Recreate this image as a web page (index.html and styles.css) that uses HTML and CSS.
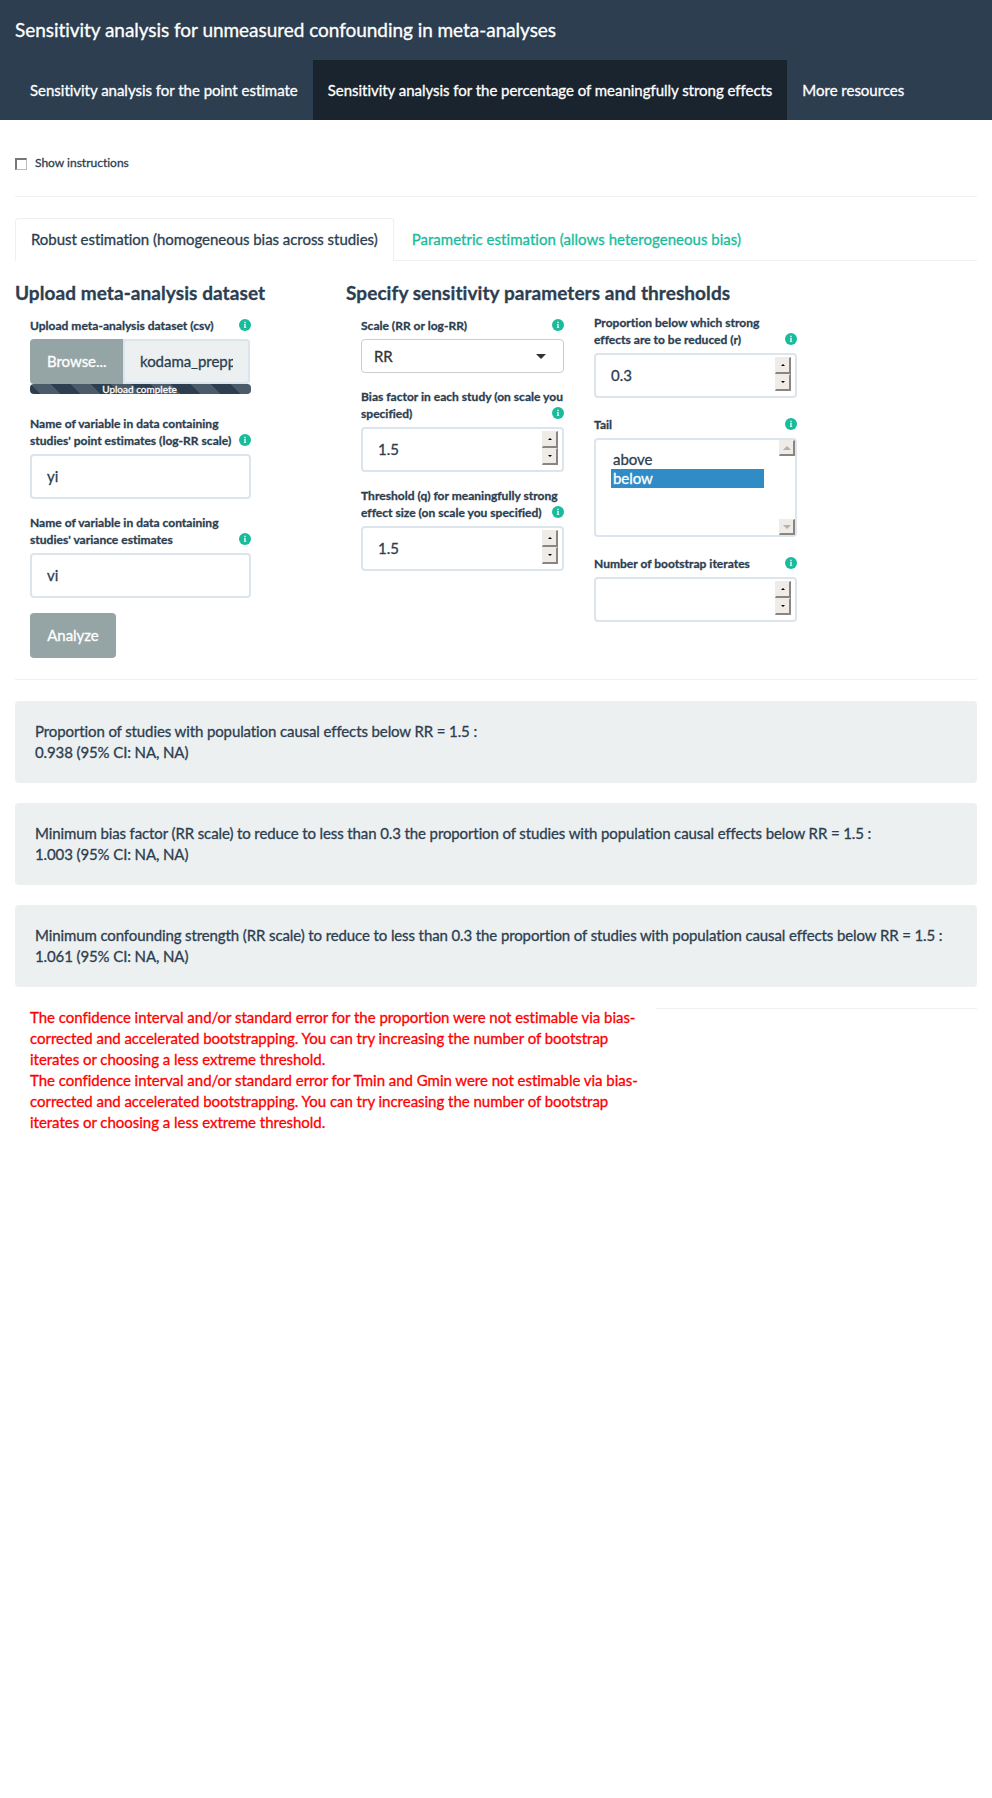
FILE: index.html
```html
<!DOCTYPE html>
<html lang="en">
<head>
<meta charset="utf-8">
<title>Sensitivity analysis for unmeasured confounding in meta-analyses</title>
<link rel="stylesheet" href="styles.css">
</head>
<body>
<svg class="defs" width="0" height="0" aria-hidden="true">
  <symbol id="info" viewBox="0 0 12 12"><circle cx="6" cy="6" r="6" fill="#18bc9c"/><path d="M5.2 2.7h1.6v1.5H5.2zM5 5h1.8v3.2h.5v.9H4.8v-.9h.4V5.9H5z" fill="#fff" fill-opacity=".8"/></symbol>
</svg>
<header class="navbar">
  <div class="brand">Sensitivity analysis for unmeasured confounding in meta-analyses</div>
  <nav class="nav">
    <a class="nav-item">Sensitivity analysis for the point estimate</a>
    <a class="nav-item active">Sensitivity analysis for the percentage of meaningfully strong effects</a>
    <a class="nav-item">More resources</a>
  </nav>
</header>
<main class="page">
  <label class="check"><span class="box"></span><span class="check-text">Show instructions</span></label>
  <hr class="rule rule-top">
  <div class="tabs">
    <a class="tab current">Robust estimation (homogeneous bias across studies)</a>
    <a class="tab">Parametric estimation (allows heterogeneous bias)</a>
  </div>
  <div class="form">
    <section class="upload">
      <h4 class="heading">Upload meta-analysis dataset</h4>
      <div class="col col-first">
        <div class="label"><span>Upload meta-analysis dataset (csv)</span><svg class="info"><use href="#info"/></svg></div>
        <div class="file"><span class="browse">Browse...</span><span class="filename"><span class="clip">kodama_prepped.csv</span></span></div>
        <div class="progress">Upload complete</div>
        <div class="label"><span>Name of variable in data containing<br>studies' point estimates (log-RR scale)</span><svg class="info"><use href="#info"/></svg></div>
        <div class="input">yi</div>
        <div class="label"><span>Name of variable in data containing<br>studies' variance estimates</span><svg class="info"><use href="#info"/></svg></div>
        <div class="input">vi</div>
        <button class="analyze">Analyze</button>
      </div>
    </section>
    <section class="params">
      <h4 class="heading">Specify sensitivity parameters and thresholds</h4>
      <div class="pair">
        <div class="col">
          <div class="label"><span>Scale (RR or log-RR)</span><svg class="info"><use href="#info"/></svg></div>
          <div class="select"><span>RR</span><i class="caret"></i></div>
          <div class="label"><span>Bias factor in each study (on scale you<br>specified)</span><svg class="info over"><use href="#info"/></svg></div>
          <div class="input number">1.5<span class="spin"><i class="up"></i><i class="down"></i></span></div>
          <div class="label"><span>Threshold (q) for meaningfully strong<br>effect size (on scale you specified)</span><svg class="info over"><use href="#info"/></svg></div>
          <div class="input number">1.5<span class="spin"><i class="up"></i><i class="down"></i></span></div>
        </div>
        <div class="col col-third">
          <div class="label"><span>Proportion below which strong<br>effects are to be reduced (r)</span><svg class="info"><use href="#info"/></svg></div>
          <div class="input number">0.3<span class="spin"><i class="up"></i><i class="down"></i></span></div>
          <div class="label"><span>Tail</span><svg class="info"><use href="#info"/></svg></div>
          <div class="list">
            <div class="options"><div class="option">above</div><div class="option selected">below</div></div>
            <div class="scroll"><i class="up"></i><i class="down"></i></div>
          </div>
          <div class="label"><span>Number of bootstrap iterates</span><svg class="info"><use href="#info"/></svg></div>
          <div class="input number"><span></span><span class="spin"><i class="up"></i><i class="down"></i></span></div>
        </div>
      </div>
    </section>
  </div>
  <hr class="rule">
  <div class="wells">
    <div class="well">Proportion of studies with population causal effects below RR = 1.5 :<br>0.938 (95% CI: NA, NA)</div>
    <div class="well">Minimum bias factor (RR scale) to reduce to less than 0.3 the proportion of studies with population causal effects below RR = 1.5 :<br>1.003 (95% CI: NA, NA)</div>
    <div class="well">Minimum confounding strength (RR scale) to reduce to less than 0.3 the proportion of studies with population causal effects below RR = 1.5 :<br>1.061 (95% CI: NA, NA)</div>
  </div>
  <div class="footer">
    <div class="warning">The confidence interval and/or standard error for the proportion were not estimable via bias-<br>corrected and accelerated bootstrapping. You can try increasing the number of bootstrap<br>iterates or choosing a less extreme threshold.<br>The confidence interval and/or standard error for Tmin and Gmin were not estimable via bias-<br>corrected and accelerated bootstrapping. You can try increasing the number of bootstrap<br>iterates or choosing a less extreme threshold.</div>
    <hr class="rule rule-end">
  </div>
</main>
</body>
</html>
```
FILE: styles.css
```css
* { box-sizing: border-box; }
body {
  margin: 0;
  background: #fff;
  color: #2c3e50;
  font: 15px/21px Lato, "Liberation Sans", sans-serif;
  font-variant-ligatures: none;
  letter-spacing: -0.04px;
  -webkit-text-stroke: 0.3px;
  white-space: nowrap;
}
.defs { position: absolute; }
.navbar { height: 120px; background: #2c3e50; color: #fff; }
.brand { height: 60px; padding: 18.5px 15px; font-size: 19px; letter-spacing: -0.04px; }
.nav { display: flex; padding-left: 15px; letter-spacing: -0.02px; }
.nav-item { height: 60px; padding: 19.5px 15px; }
.nav-item.active { background: #1a242f; letter-spacing: -0.03px; }

.page { padding: 0 15px; }
.check { display: flex; padding-top: 32px; height: 76px; font-size: 12px; letter-spacing: 0; }
.box {
  width: 12px; height: 12px; margin: 6px 8px 0 0;
  border: 1px solid #bbb; border-top: 2px solid #777; border-left: 2px solid #777;
}
.rule { height: 1px; margin: 0; border: 0; background: #ecf0f1; }
.tabs { display: flex; gap: 2px; height: 43px; margin-top: 21px; border-bottom: 1px solid #ecf0f1; }
.tab { height: 43px; padding: 11px 16px; color: #18bc9c; letter-spacing: 0.03px; }
.tab.current {
  padding: 10px 15px; background: #fff; color: #2c3e50; letter-spacing: -0.04px;
  border: 1px solid #ecf0f1; border-bottom: 0; border-radius: 4px 4px 0 0;
}

.form { display: grid; grid-template-columns: 331px 1fr; height: 418px; }
.heading { margin: 20px 0 0; height: 36px; font-size: 19px; line-height: 23px; letter-spacing: 0.07px; }
.col { width: 203px; margin-left: 15px; }
.col-first { width: 221px; }
.pair { display: flex; gap: 15px; }
.col-third { margin-top: -3px; }
.label { display: flex; justify-content: space-between; align-items: flex-end; padding-bottom: 5px; font-size: 12px; line-height: 17px; font-weight: 700; letter-spacing: 0.02px; }
.info { flex: none; width: 12px; height: 12px; margin-bottom: 3px; }
.info.over { margin-left: -12px; }
.input { display: flex; justify-content: space-between; height: 45px; margin-bottom: 15px; padding: 10px 15px; border: 2px solid #dce4ec; border-radius: 4px; }
.number { padding: 10px 4px 0 15px; }
.col-third .label + .number { margin-bottom: 18px; }
.spin { width: 16px; height: 34px; margin-top: -8px; }
.up, .down {
  display: flex; align-items: center; justify-content: center;
  width: 16px; height: 17px; background: #efebe7;
  border: 1px solid #efebe7; border-right: 2px solid #8a8580; border-bottom: 2px solid #8a8580;
}
.up::before, .down::before { content: ""; border: 2px solid transparent; border-top-width: 0; border-bottom: 2px solid #000; }
.down::before { border-bottom: 0; border-top: 2px solid #000; }

.file { display: flex; height: 45px; }
.browse { width: 93px; padding: 12px 17px; background: #95a5a6; color: #fff; border-radius: 4px 0 0 4px; }
.filename { width: 127px; padding: 10px 15px; background: #ecf0f1; border: 2px solid #dce4ec; border-radius: 0 4px 4px 0; }
.clip { display: block; width: 93px; overflow: hidden; }
.progress {
  height: 10px; margin-bottom: 21px; padding-right: 2px; border-radius: 4px; overflow: hidden;
  background: linear-gradient(45deg, rgba(255,255,255,.15) 25%, transparent 25%, transparent 50%, rgba(255,255,255,.15) 50%, rgba(255,255,255,.15) 75%, transparent 75%) 1px 0 / 40px 40px #2c3e50;
  color: #fff; font-size: 10px; line-height: 11px; text-align: center; letter-spacing: 0;
}
.analyze { display: block; width: 86px; height: 45px; padding: 0; border: 0; border-radius: 4px; background: #95a5a6; color: #fff; font: inherit; letter-spacing: inherit; }
.select { display: flex; justify-content: space-between; align-items: center; height: 34px; margin-bottom: 15px; padding: 0 17px 0 12px; border: 1px solid #ccc; border-radius: 4px; color: #333; }
.caret { border: 5px solid transparent; border-top-color: #333; border-bottom: 0; }
.list { display: flex; justify-content: space-between; height: 99px; margin-bottom: 18px; padding-left: 15px; border: 2px solid #dce4ec; border-radius: 4px; }
.options { width: 153px; padding-top: 10px; }
.option { height: 19px; padding-left: 2px; line-height: 19px; }
.option.selected { background: #308cc6; color: #fff; }
.scroll { display: flex; flex-direction: column; justify-content: space-between; }
.scroll i { height: 16px; }
.scroll i::before { border-left-width: 4px; border-right-width: 4px; }
.scroll .up::before { border-bottom: 4px solid #b5b0aa; }
.scroll .down::before { border-top: 4px solid #b5b0aa; }

.wells { display: grid; gap: 20px; margin-top: 21px; }
.well { height: 82px; padding: 20px; border-radius: 4px; background: #ecf0f1; letter-spacing: -0.11px; }
.footer { display: flex; margin-top: 20px; }
.warning { width: 641px; padding-left: 15px; color: #f00; letter-spacing: -0.025px; }
.rule-end { flex: 1; margin-top: 1px; }
```
